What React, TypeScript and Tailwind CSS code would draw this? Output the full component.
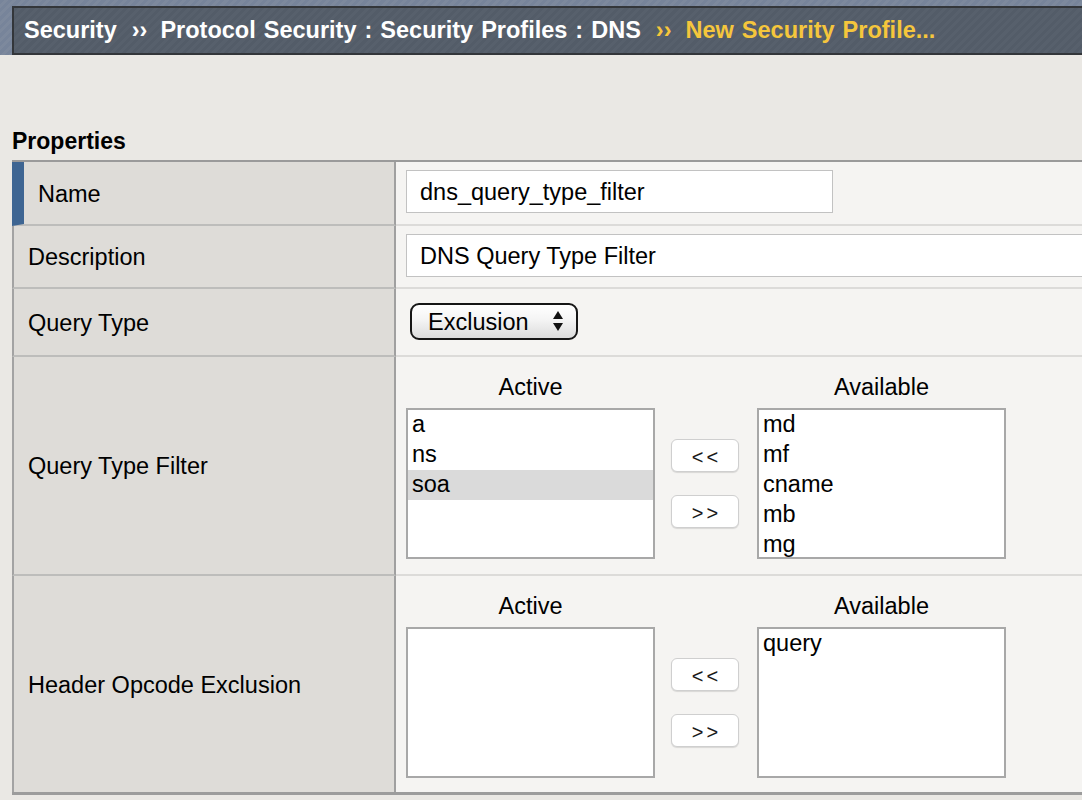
import React from "react";

function ListBox({ items, selected }: { items: string[]; selected?: string }) {
  return (
    <div className="h-[151px] w-[249px] border-2 border-[#a8a8a8] bg-white overflow-hidden">
      {items.map((it) => (
        <div
          key={it}
          className={
            "h-[30px] leading-[30px] pl-[4px] text-[23.5px] text-black " +
            (it === selected ? "bg-[#dadada]" : "")
          }
        >
          <span className="relative top-[-1px]">{it}</span>
        </div>
      ))}
    </div>
  );
}

function MoveButton({ label }: { label: string }) {
  return (
    <div className="h-[33px] w-[68px] rounded-[6px] border border-[#cfcfcf] bg-white shadow-[0_1px_1px_rgba(0,0,0,0.12)] flex items-center justify-center text-[20px] tracking-[3px] text-[#1a1a1a] pl-[3px] pt-[2px]">
      {label}
    </div>
  );
}

function DualList({ active, available, selected }: { active: string[]; available: string[]; selected?: string }) {
  return (
    <div className="flex items-start pl-[10px] pt-[15px]">
      <div className="flex flex-col items-center">
        <div className="h-[28px] leading-[28px] text-[23.5px] text-black pt-[1px]">Active</div>
        <div className="mt-[8px]">
          <ListBox items={active} selected={selected} />
        </div>
      </div>
      <div className="flex flex-col items-center justify-center gap-[23px] h-[151px] mt-[36px] ml-[16px] mr-[18px]">
        <MoveButton label="<<" />
        <MoveButton label=">>" />
      </div>
      <div className="flex flex-col items-center">
        <div className="h-[28px] leading-[28px] text-[23.5px] text-black pt-[1px]">Available</div>
        <div className="mt-[8px]">
          <ListBox items={available} />
        </div>
      </div>
    </div>
  );
}

function Row({
  label,
  height,
  accent,
  last,
  children,
}: {
  label: string;
  height: string;
  accent?: boolean;
  last?: boolean;
  children: React.ReactNode;
}) {
  return (
    <div className={"flex " + (last ? "border-b-[3px] border-[#9c9c9c]" : "")}>
      <div
        className={
          "w-[384px] shrink-0 bg-[#dedcd8] flex items-center border-r-2 border-r-[#a0a0a0] pt-[3px] " +
          (accent ? "border-l-[12px] border-l-[#3e6592] pl-[14px] " : "border-l-2 border-l-[#a3a3a3] pl-[14px] ") +
          (last ? "" : "border-b-2 border-b-[#bdbdbb] ") +
          height
        }
      >
        <span className="text-[23.5px] text-black">{label}</span>
      </div>
      <div
        className={
          "flex-1 bg-[#f5f4f2] " + (last ? "" : "border-b-2 border-b-[#dcdbd9] ") + height
        }
      >
        {children}
      </div>
    </div>
  );
}

export default function App() {
  return (
    <div className="w-[1082px] h-[800px] overflow-hidden bg-[#eae8e4] font-['Liberation_Sans',Arial,Helvetica,sans-serif]">
      {/* Header */}
      <div className="h-[55px] pt-[6px] pl-[12px] bg-[repeating-linear-gradient(135deg,#77849a_0px,#77849a_3px,#7d899d_3px,#7d899d_6px)]">
        <div className="h-[49px] border-t-2 border-b-2 border-l-2 border-[#33363a] bg-[repeating-linear-gradient(135deg,#535c68_0px,#535c68_3px,#57606c_3px,#57606c_6px)] pl-[10px] pt-[9px]">
          <div className="h-[26px] leading-[26px] text-[23.5px] font-bold text-white whitespace-nowrap [word-spacing:1.5px]">
            <span>Security</span>
            <span className="ml-[15px] mr-[13px]">››</span>
            <span>Protocol Security : Security Profiles : DNS</span>
            <span className="ml-[15px] mr-[14px] text-[#f5c63c]">››</span>
            <span className="text-[#f5c63c]">New Security Profile...</span>
          </div>
        </div>
      </div>

      {/* Properties title */}
      <div className="mt-[72px] pl-[12px] h-[28px] leading-[28px] text-[23px] font-bold text-black">
        Properties
      </div>

      {/* Table */}
      <div className="mt-[5px] ml-[12px] w-[1100px] border-t-2 border-[#9a9a9a]">
        <Row label="Name" height="h-[64px]" accent>
          <div className="pl-[10px] pt-[8px]">
            <div className="h-[43px] w-[427px] border border-[#c2c2c2] bg-white pl-[13px] pt-[3px] flex items-center text-[23.5px] text-black">
              dns_query_type_filter
            </div>
          </div>
        </Row>
        <Row label="Description" height="h-[63px]">
          <div className="pl-[10px] pt-[8px]">
            <div className="h-[43px] w-[720px] border border-[#c2c2c2] bg-white pl-[13px] pt-[3px] flex items-center text-[23.5px] text-black">
              DNS Query Type Filter
            </div>
          </div>
        </Row>
        <Row label="Query Type" height="h-[68px]">
          <div className="h-full flex items-center pl-[14px] pb-[2px]">
            <div className="h-[37px] w-[168px] rounded-[9px] border-2 border-[#161616] bg-[linear-gradient(180deg,#ffffff_0%,#f4f4f4_45%,#dcdcdc_100%)] flex items-center pl-[16px] pr-[12px] justify-between">
              <span className="text-[23.5px] text-black leading-none pt-[3px]">Exclusion</span>
              <svg width="12" height="22" viewBox="0 0 12 22">
                <polygon points="6,1 11,9 1,9" fill="#111" />
                <polygon points="1,13 11,13 6,21" fill="#111" />
              </svg>
            </div>
          </div>
        </Row>
        <Row label="Query Type Filter" height="h-[219px]">
          <DualList active={["a", "ns", "soa"]} available={["md", "mf", "cname", "mb", "mg"]} selected="soa" />
        </Row>
        <Row label="Header Opcode Exclusion" height="h-[216px]" last>
          <DualList active={[]} available={["query"]} />
        </Row>
      </div>
    </div>
  );
}
